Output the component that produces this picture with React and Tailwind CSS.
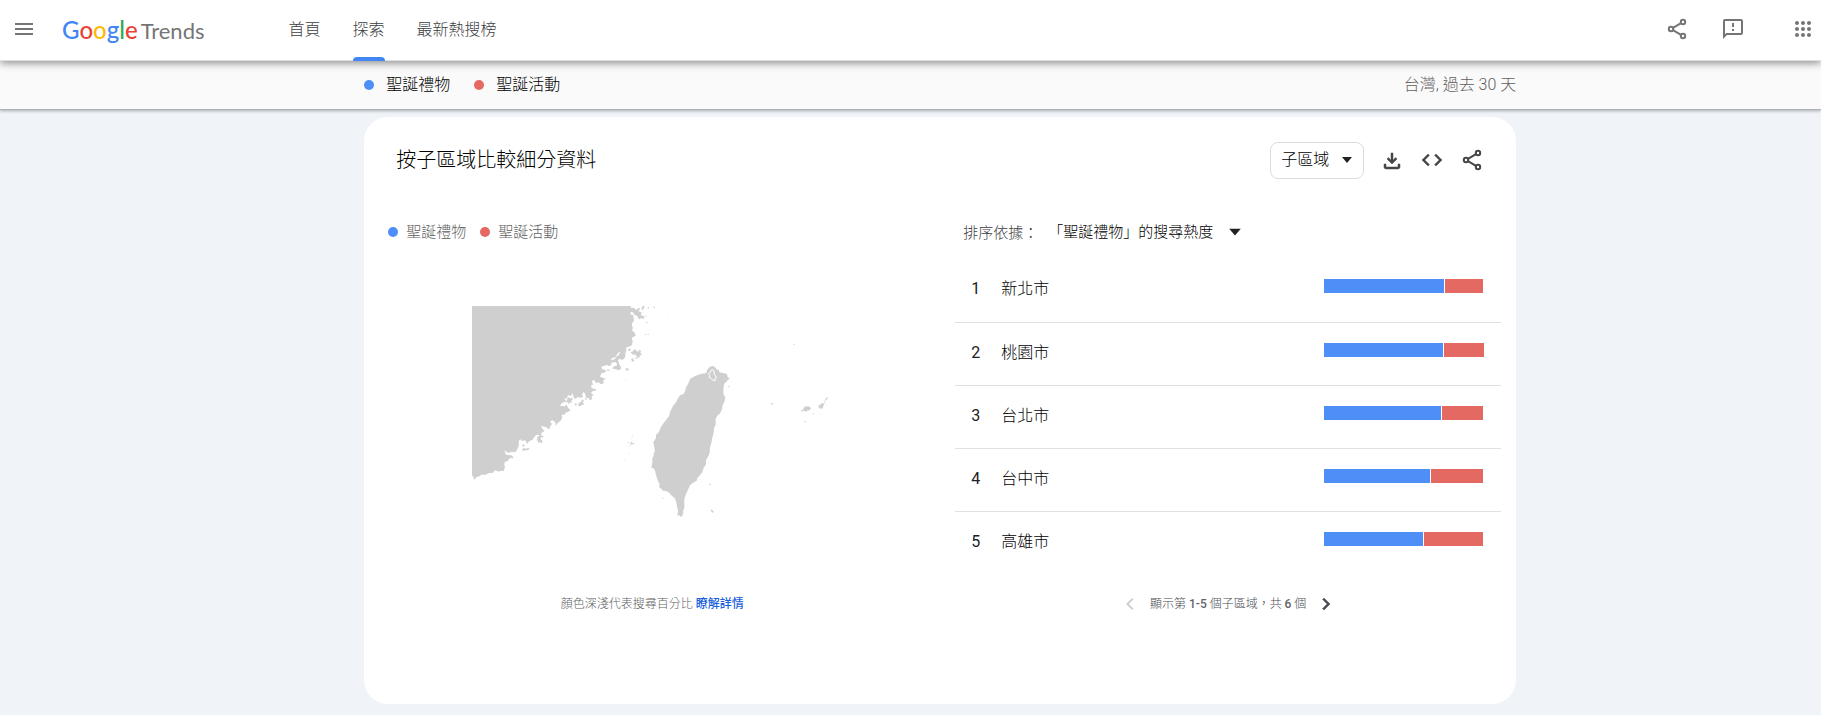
const regions = [
  { name: '新北市', first: 120, second: 38 },
  { name: '桃園市', first: 119, second: 40 },
  { name: '台北市', first: 117, second: 41 },
  { name: '台中市', first: 106, second: 52 },
  { name: '高雄市', first: 99, second: 59 },
];

function Icon({ d, className = '' }) {
  return (
    <svg viewBox="0 0 24 24" className={`size-6 shrink-0 fill-current ${className}`} aria-hidden="true">
      <path d={d} />
    </svg>
  );
}

function ShareIcon() {
  return (
    <svg viewBox="0 0 24 24" className="size-6 shrink-0 fill-none stroke-current" strokeWidth="2" aria-hidden="true">
      <circle cx="18" cy="5" r="2.200" />
      <circle cx="6" cy="12" r="2.200" />
      <circle cx="18" cy="19" r="2.200" />
      <path d="M16 6.200L8 10.900M8 13.100L16 17.800" />
    </svg>
  );
}

const icons = {
  menu: 'M3 18h18v-2H3v2zm0-5h18v-2H3v2zm0-7v2h18V6H3z',
  feedback:
    'M20 2H4c-1.100 0-1.990.9-1.990 2L2 22l4-4h14c1.100 0 2-.9 2-2V4c0-1.100-.9-2-2-2zm0 14H5.170L4 17.170V4h16v12zM11 12h2v2h-2zm0-6h2v4h-2z',
  apps: 'M6 8c1.100 0 2-.9 2-2s-.9-2-2-2-2 .9-2 2 .9 2 2 2zm6 12c1.100 0 2-.9 2-2s-.9-2-2-2-2 .9-2 2 .9 2 2 2zm-6 0c1.100 0 2-.9 2-2s-.9-2-2-2-2 .9-2 2 .9 2 2 2zm0-6c1.100 0 2-.9 2-2s-.9-2-2-2-2 .9-2 2 .9 2 2 2zm6 0c1.100 0 2-.9 2-2s-.9-2-2-2-2 .9-2 2 .9 2 2 2zm4-8c0 1.100.9 2 2 2s2-.9 2-2-.9-2-2-2-2 .9-2 2zm-4 2c1.100 0 2-.9 2-2s-.9-2-2-2-2 .9-2 2 .9 2 2 2zm6 6c1.100 0 2-.9 2-2s-.9-2-2-2-2 .9-2 2 .9 2 2 2zm0 6c1.100 0 2-.9 2-2s-.9-2-2-2-2 .9-2 2 .9 2 2 2z',
  download: 'M11 5h2v7.200l2.600-2.600L17 11l-5 5-5-5 1.400-1.400 2.600 2.600zM4 16h2v3h12v-3h2v3c0 1.100-.9 2-2 2H6c-1.100 0-2-.9-2-2z',
  code: 'M9.400 16.600L4.800 12l4.600-4.600L8 6l-6 6 6 6 1.400-1.400zm5.200 0l4.600-4.600-4.600-4.600L16 6l6 6-6 6-1.400-1.400z',
  left: 'M15.410 7.410L14 6l-6 6 6 6 1.410-1.410L10.830 12z',
  right: 'M10 6L8.590 7.410 13.170 12l-4.580 4.590L10 18l6-6z',
};

const boldIcons = ['download', 'code', 'right'];

function IconButton({ icon, label, className = '', disabled = false }) {
  return (
    <button type="button" aria-label={label} disabled={disabled} className={`flex items-center justify-center ${className}`}>
      {icon === 'share' ? (
        <ShareIcon />
      ) : (
        <Icon d={icons[icon]} className={boldIcons.includes(icon) ? 'stroke-current stroke-[0.5]' : ''} />
      )}
    </button>
  );
}

function Caret({ className = '' }) {
  return (
    <svg viewBox="0 0 10 6" className={`pointer-events-none absolute top-1/2 -translate-y-1/2 fill-[#202124] ${className}`} aria-hidden="true">
      <path d="M0 0h10L5 6z" />
    </svg>
  );
}

function Legend({ className = '', textGap = '' }) {
  return (
    <ul className={`flex items-center ${className}`}>
      <li className={`flex items-center ${textGap}`}>
        <span className="size-2.5 rounded-full bg-[#4d8ef7]" />
        聖誕禮物
      </li>
      <li className={`flex items-center ${textGap}`}>
        <span className="size-2.5 rounded-full bg-[#e46962]" />
        聖誕活動
      </li>
    </ul>
  );
}

function Logo() {
  return (
    <a href="#home" aria-label="Google Trends" className="flex items-baseline gap-[3px] font-['Lato',sans-serif] leading-8 font-normal">
      <span className="text-[24px] font-medium">
        <span className="text-[#4285f4]">G</span>
        <span className="text-[#ea4335]">o</span>
        <span className="text-[#fbbc04]">o</span>
        <span className="text-[#4285f4]">g</span>
        <span className="text-[#34a853]">l</span>
        <span className="text-[#ea4335]">e</span>
      </span>
      <span className="text-[22px] text-[#757575]">Trends</span>
    </a>
  );
}

function TaiwanMap() {
  return (
    <svg viewBox="36 48 1080 636" className="h-auto w-[360px] max-w-full self-center fill-[#cfcfcf]" role="img" aria-label="台灣地圖">
      <path d="M36 48H512L513 54 522 53 528 60 536 53 541 57 535 63 546 68 542 75 552 79 553 86 542 85 537 88 531 77 523 74 519 67 511 66 513 74 520 76 522 92 517 99 515 105 519 113 516 121 524 128 527 137 520 141 515 143 518 153 516 166 510 169 503 171 497 175 500 181 497 185 495 203 488 209 477 207 474 210 478 223 484 235 478 241 466 238 456 235 463 229 472 226 468 216 455 218 453 211 464 208 470 199 476 196 482 184 474 189 466 202 455 205 453 211 455 222 449 229 441 225 424 230 426 237 436 239 438 247 425 249 420 260 428 263 438 266 430 270 431 280 423 283 416 277 408 279 402 270 396 273 399 284 393 286 395 295 407 297 409 301 398 304 393 309 401 315 395 319 396 328 387 331 388 324 379 324 376 313 371 305 366 314 369 321 360 323 352 320 348 328 342 323 337 309 333 318 324 315 321 326 312 325 319 334 305 339 300 347 312 349 320 345 324 353 332 361 322 367 315 369 316 373 305 375 307 383 302 392 293 399 288 408 286 397 278 391 270 394 276 402 271 409 268 418 257 411 243 408 247 416 253 423 245 429 242 436 230 434 223 441 218 449 207 454 202 462 196 451 186 453 180 447 176 455 177 464 171 480 165 487 155 485 144 489 133 480 138 494 154 496 159 500 160 505 150 504 143 513 134 516 133 524 135 531 131 543 121 542 117 545 105 541 99 548 88 549 76 554 65 554 58 559 49 562 43 570 40 560 36 557Z" />
      <g>
        <path d="M322 327l5-6 4 5 6-4 1 8-5 2 4 7-7-2-3 6-4-7-6 2 3-6zM343 342l4-2 4 3-3 5zM356 340l7-5 3-7 5 3-2 7 4 5-8 2-4 4-7-2zM374 325l4-2 3 4-4 3zM231 441l6-3 5-8 3 7 6 1-3 5-6-2 1 8 5 4-3 8-4-5-8 3 2-6-6-3 4-3zM186 466l4-3 5 4-5 3zM187 477l5-3 4 2 10-2 3 4-9 3-13 1zM482 189l3 3-3 11-4 3zM504 179l5-4 4 5-6 4zM511 187l6-2 7-8 6 5 4 5 4-8 5 4-2 7 6 3-9 5 1 7-6-3-5 6-3-3 6-5-5-7-6 2zM513 208l6-3 3 7-5 4zM495 237l8-3 4 5-6 3zM545 52l4-4 5 1-4 9-5 3zM562 53l4-2 2 3-4 2zM580 51l3-2 2 4-4 2zM555 77l3-1 1 3-3 1zM556 98l4-2 4 3-5 1zM554 132h3v3h-3zM562 132l5-1v3h-4zM440 240l5-2 5 3-7 3zM496 267h2v2h-2z" />
        <path d="M503 458l5-2 1 2-5 2zM512 456l3-1 2 4 7 1-3 3-6-1-3 5-2-2 3-4zM514 447l2-4 1 4zM517 437h2v3h-2zM505 469l4 1-2 1zM506 490h2v3h-2zM493 509h3v2h-3zM519 503h2v2h-2z" />
      </g>
      <g transform="translate(510 0)">
        <path d="M247 228L254 230 259 237 265 240 269 247 279 249 291 252 293 262 300 266 293 270 290 275 284 279 281 288 280 305 281 314 286 322 283 337 278 345 276 358 270 370 262 377 257 387 257 404 252 414 251 428 247 443 244 460 240 472 239 488 234 500 228 510 228 523 221 533 217 547 208 558 202 564 200 572 188 579 180 586 174 599 167 614 163 627 163 654 159 663 160 670 157 674 158 678 152 680 147 675 142 678 144 662 141 649 138 634 134 624 126 618 117 608 109 603 99 602 92 595 87 591 89 583 83 571 78 555 75 542 70 535 64 533 67 517 67 504 71 498 71 489 75 485 70 456 78 445 78 435 86 427 93 411 101 399 110 388 117 379 120 366 129 348 139 335 143 326 151 315 160 313 166 302 168 291 174 283 181 266 194 259 209 253 229 249 231 240 239 231Z" />
        <path d="M243 241l6-2 4 7 0 8 7 8-5 3 1 6-7 1-4-6-8-4 2-6-4-5 6-4z" className="fill-none stroke-white" strokeWidth="3" />
        <path d="M521 353l6-4 12 1 4 5-4 6-9 1-1 4-6-4-5 1zM512 362l4-3 3 3-4 3zM566 346l7-3 3-5 5 3 3-8 5-10 4-2-1 6-7 7-2 7-2 5-3 9-8 1-4-5zM421 341l4-2 6 2-3 3zM548 370h4v3h-4zM523 394h5v3h-5zM567 371h3v2h-3zM490 162h4v2h-4zM237 582l3-2 3 5-3 1zM242 661l4-3 2 4 4 4-5 2zM294 288h5v2h-5zM98 625h3v2h-3zM114 80h3v2h-3z" />
      </g>
    </svg>
  );
}

export default function App() {
  return (
    <div className="min-h-screen bg-[#f0f3f8] pb-3 font-['Roboto','Noto_Sans_CJK_TC',sans-serif] font-light text-black">
      <header className="relative z-10 flex h-[61px] items-center border-b border-[#e0e0e0] bg-white pr-1.5 pl-3 text-[#757575] shadow-[0_2px_8px_rgba(0,0,0,0.45)]">
        <IconButton icon="menu" label="主選單" className="mr-[26px] pb-0.5" />
        <Logo />
        <nav className="ml-[84px] flex h-[60px] gap-8 self-start text-[16px] text-[#3c4043]">
          <a href="#home" className="flex items-center">首頁</a>
          <a href="#explore" aria-current="page" className="relative flex items-center">
            探索
            <span className="absolute inset-x-0 -bottom-px h-1 rounded-t bg-[#4285f4]" />
          </a>
          <a href="#trending" className="flex items-center">最新熱搜榜</a>
        </nav>
        <div className="ml-auto flex items-center pb-0.5">
          <IconButton icon="share" label="分享" className="mr-8" />
          <IconButton icon="feedback" label="提供意見" className="mr-[46px]" />
          <IconButton icon="apps" label="Google 應用程式" />
        </div>
      </header>

      <div className="border-b border-[#aeb1b6] bg-[#fafafa] shadow-[0_1px_3px_rgba(0,0,0,0.3)]">
        <div className="ml-[20%] flex h-12 max-w-[1152px] items-center justify-between text-[16px]">
          <Legend className="gap-6" textGap="gap-3" />
          <p className="text-[#5f5f5f]">台灣, 過去 30 天</p>
        </div>
      </div>

      <main className="mt-[7px] ml-[20%] max-w-[1152px] rounded-3xl bg-white pt-6 pb-[88px]">
        <div className="flex h-[38px] items-center pr-8 pl-8">
          <h1 className="mr-auto text-[20px]">按子區域比較細分資料</h1>
          <div className="relative mr-4">
            <select aria-label="解析度" className="h-[37px] w-[94px] appearance-none rounded-lg border border-[#dadce0] bg-white pl-2.5 text-[16px]">
              <option>子區域</option>
            </select>
            <Caret className="right-3 w-2.5" />
          </div>
          <div className="flex gap-4 text-[#444746]">
            <IconButton icon="download" label="下載 CSV" />
            <IconButton icon="code" label="嵌入" />
            <IconButton icon="share" label="分享圖表" />
          </div>
        </div>

        <div className="mt-[41px] grid grid-cols-2">
          <section className="flex flex-col">
            <Legend className="mb-[62px] h-6 gap-3.5 pl-6 text-[15px] text-[#5f5f5f]" textGap="gap-2" />
            <TaiwanMap />
            <p className="mt-auto text-center text-[12px] leading-6 text-[#5f5f5f]">
              顏色深淺代表搜尋百分比{' '}
              <a href="#learn" className="font-medium text-[#1a62dc]">瞭解詳情</a>
            </p>
          </section>

          <section className="pr-[15px] pl-[15px]">
            <div className="mb-[15px] flex h-6 items-center pl-2 text-[15px]">
              <label htmlFor="sort" className="pt-0.5 text-[#3c4043]">排序依據：</label>
              <div className="relative ml-2.5">
                <select id="sort" className="block h-6 w-[197px] appearance-none bg-white text-[15px]">
                  <option>「聖誕禮物」的搜尋熱度</option>
                </select>
                <Caret className="right-1 w-3" />
              </div>
            </div>
            <table className="w-full border-collapse text-[16px]">
              <tbody>
                {regions.map((region, i) => (
                  <tr key={region.name} className="h-[63px] border-b border-[#e0e0e0] last:border-b-0">
                    <td className="w-[46px] pb-0.5 pl-4 font-normal text-[#202124]">{i + 1}</td>
                    <td className="pb-0.5">{region.name}</td>
                    <td className="w-[177px] pb-2">
                      <div className="flex h-3.5 w-[160px] gap-px">
                        <span className="bg-[#4d8ef7]" style={{ width: region.first }} />
                        <span className="bg-[#e46962]" style={{ width: region.second }} />
                      </div>
                    </td>
                  </tr>
                ))}
              </tbody>
            </table>
            <div className="mt-[18px] flex h-6 items-center justify-center gap-2 text-[12px] text-[#4a4d51]">
              <IconButton icon="left" label="上一頁" disabled className="text-[#cfcfcf]" />
              <span>
                顯示第 <span className="font-medium text-[#5f6368]">1-5</span> 個子區域，共 <span className="font-medium text-[#5f6368]">6</span> 個
              </span>
              <IconButton icon="right" label="下一頁" />
            </div>
          </section>
        </div>
      </main>
    </div>
  );
}
